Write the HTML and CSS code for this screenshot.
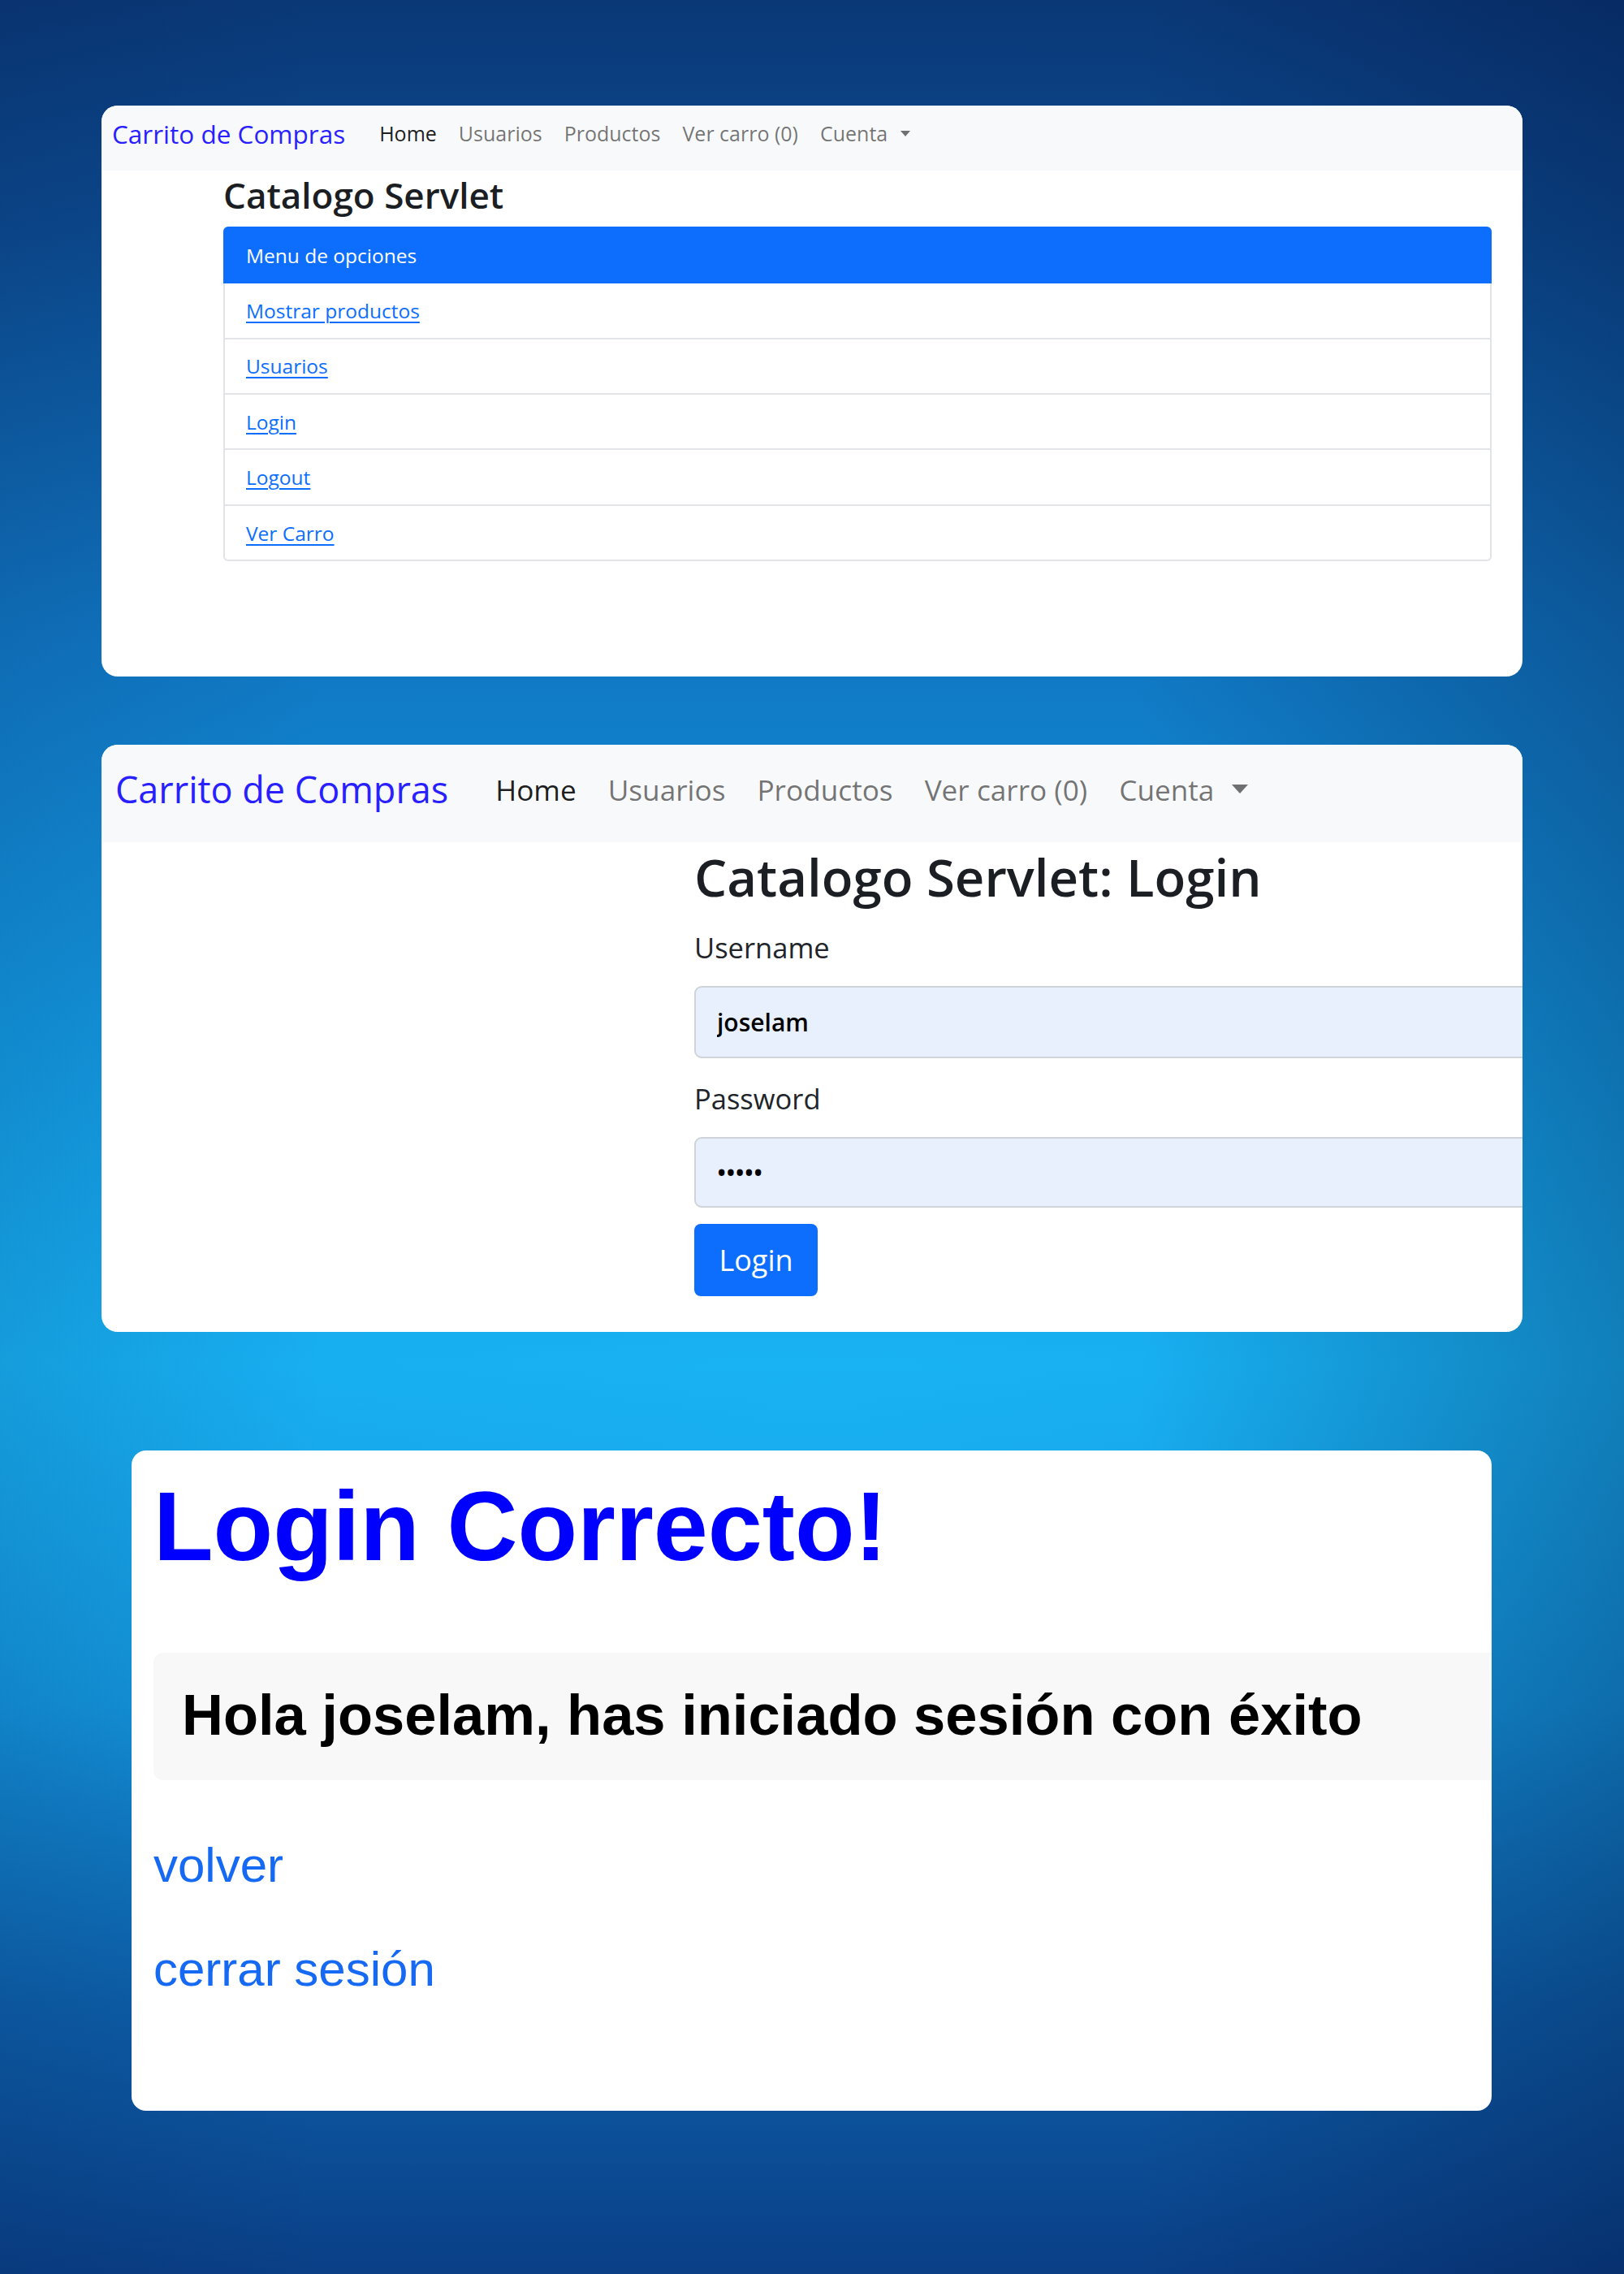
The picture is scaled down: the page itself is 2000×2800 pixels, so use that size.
FILE: index.html
```html
<!DOCTYPE html>
<html lang="es">
<head>
<meta charset="utf-8">
<title>Carrito de Compras</title>
<link rel="stylesheet" href="styles.css">
</head>
<body>
<main class="page">
  <section class="card card-catalog">
    <nav class="navbar navbar-sm">
      <a class="brand" href="#">Carrito de Compras</a>
      <ul class="nav-links">
        <li><a class="nav-link active" href="#">Home</a></li>
        <li><a class="nav-link" href="#">Usuarios</a></li>
        <li><a class="nav-link" href="#">Productos</a></li>
        <li><a class="nav-link" href="#">Ver carro (0)</a></li>
        <li><a class="nav-link" href="#">Cuenta<span class="caret"></span></a></li>
      </ul>
    </nav>
    <div class="catalog-body">
      <h3 class="catalog-title">Catalogo Servlet</h3>
      <div class="list-group">
        <div class="list-head">Menu de opciones</div>
        <div class="list-item"><a href="#">Mostrar productos</a></div>
        <div class="list-item"><a href="#">Usuarios</a></div>
        <div class="list-item"><a href="#">Login</a></div>
        <div class="list-item"><a href="#">Logout</a></div>
        <div class="list-item"><a href="#">Ver Carro</a></div>
      </div>
    </div>
  </section>

  <section class="card card-login">
    <nav class="navbar navbar-lg">
      <a class="brand" href="#">Carrito de Compras</a>
      <ul class="nav-links">
        <li><a class="nav-link active" href="#">Home</a></li>
        <li><a class="nav-link" href="#">Usuarios</a></li>
        <li><a class="nav-link" href="#">Productos</a></li>
        <li><a class="nav-link" href="#">Ver carro (0)</a></li>
        <li><a class="nav-link" href="#">Cuenta<span class="caret"></span></a></li>
      </ul>
    </nav>
    <form class="login-body">
      <h3 class="login-title">Catalogo Servlet: Login</h3>
      <label class="field-label" for="username">Username</label>
      <input class="field-input" id="username" type="text" value="joselam">
      <label class="field-label" for="password">Password</label>
      <input class="field-input field-pass" id="password" type="password" value="12345">
      <button class="btn-login" type="button">Login</button>
    </form>
  </section>

  <section class="card card-success">
    <h1 class="success-title">Login Correcto!</h1>
    <div class="success-box">
      <h3 class="success-msg">Hola joselam, has iniciado sesión con éxito</h3>
    </div>
    <a class="success-link link-back" href="#">volver</a>
    <a class="success-link link-logout" href="#">cerrar sesión</a>
  </section>
</main>
</body>
</html>
```
FILE: styles.css
```css
* { box-sizing: border-box; }

html, body { margin: 0; padding: 0; }

body {
  width: 2000px;
  height: 2800px;
  overflow: hidden;
  font-family: "Open Sans", "Noto Sans", sans-serif;
  color: #212529;
  background:
    linear-gradient(90deg, rgba(0, 10, 50, 0.10) 0%, rgba(0, 10, 50, 0) 20%, rgba(0, 10, 50, 0) 70%, rgba(0, 10, 50, 0.28) 100%),
    radial-gradient(ellipse 70% 22% at 50% 62%, rgba(30, 190, 250, 0.40) 0%, rgba(30, 190, 250, 0) 100%),
    linear-gradient(180deg, #0a3877 0%, #0c4a8f 10%, #1076c2 28%, #1396de 45%, #16abee 60%, #1391d9 75%, #0d5fa9 88%, #0a3f86 100%);
}

.page {
  display: flex;
  flex-direction: column;
  align-items: flex-start;
  padding-top: 130px;
}

.card {
  background: #ffffff;
  overflow: hidden;
  border-radius: 20px;
}

.card-catalog { margin-left: 125px; width: 1750px; height: 703px; }
.card-login   { margin: 84px 0 0 125px; width: 1750px; height: 723px; }
.card-success { margin: 146px 0 0 162px; width: 1675px; height: 813px; border-radius: 18px; padding-left: 27px; }

/* navbar */
.navbar {
  display: flex;
  align-items: center;
  background: #f8f9fa;
}
.navbar-sm { height: 80px; padding: 0 0 12px 13px; }
.navbar-lg { height: 120px; padding: 0 0 11px 17px; }

.brand { color: #2a1fff; text-decoration: none; white-space: nowrap; }
.navbar-sm .brand { font-size: 31.5px; margin-right: 28.5px; }
.navbar-lg .brand { font-size: 45px; margin-right: 38.5px; }

.nav-links { display: flex; list-style: none; margin: 0; padding: 0; }
.nav-link {
  display: flex;
  align-items: center;
  color: rgba(0, 0, 0, 0.55);
  text-decoration: none;
  white-space: nowrap;
}
.nav-link.active { color: rgba(0, 0, 0, 0.9); }
.navbar-sm .nav-link { font-size: 25px; padding: 0 13.5px; }
.navbar-lg .nav-link { font-size: 35.2px; padding: 0 19.5px; }

.caret {
  display: inline-block;
  width: 0;
  height: 0;
  border-style: solid;
  border-color: currentColor transparent transparent transparent;
}
.navbar-sm .caret { border-width: 7px 6px 0 6px; margin-left: 16px; }
.navbar-lg .caret { border-width: 11px 10px 0 10px; margin-left: 22px; }

/* catalog */
.catalog-body { margin: 0 38px 0 150px; }
.catalog-title {
  font-size: 44px;
  font-weight: 600;
  line-height: 1.2;
  margin: 4px 0 12.5px;
  color: #1b1f23;
}
.list-group { display: flex; flex-direction: column; }
.list-head {
  height: 70px;
  display: flex;
  align-items: center;
  padding-left: 28px;
  background: #0d6efd;
  color: #ffffff;
  font-size: 24.5px;
  border-radius: 6px 6px 0 0;
}
.list-item {
  height: 68.4px;
  display: flex;
  align-items: center;
  padding-left: 26px;
  border: 2px solid #e2e4e7;
  border-top: none;
  font-size: 24.5px;
}
.list-item:last-child { border-radius: 0 0 6px 6px; }
.list-item a { color: #0d6efd; text-decoration: underline; text-underline-offset: 4px; text-decoration-thickness: 2px; }

/* login form */
.login-body { margin-left: 730px; }
.login-title {
  font-size: 63.5px;
  font-weight: 600;
  line-height: 1.2;
  margin: 5px 0 22.5px;
  color: #1b1f23;
  white-space: nowrap;
}
.field-label {
  display: block;
  font-size: 34.5px;
  line-height: 1.5;
  color: #212529;
  margin-bottom: 21.5px;
}
.field-input {
  display: block;
  width: 1100px;
  height: 89px;
  margin: 0 0 23.7px;
  padding: 0 26px;
  border: 2px solid #ced4da;
  border-radius: 9px;
  background: #e8f0fe;
  font-family: "Open Sans", "Noto Sans", sans-serif;
  font-size: 30px;
  font-weight: 600;
  color: #000000;
  outline: none;
}
.field-pass { height: 87px; margin-bottom: 20.5px; }
.btn-login {
  display: block;
  width: 152px;
  height: 89px;
  padding: 0;
  border: none;
  border-radius: 8px;
  background: #0d6efd;
  color: #ffffff;
  font-family: "Open Sans", "Noto Sans", sans-serif;
  font-size: 36px;
}

/* success */
.success-title {
  font-family: "Liberation Sans", Arial, sans-serif;
  font-size: 120.5px;
  font-weight: 700;
  line-height: 138px;
  color: #0000ff;
  margin: 25.4px 0 0;
  white-space: nowrap;
}
.success-box {
  margin-top: 85.6px;
  height: 157px;
  background: #f8f8f8;
  border-radius: 12px 0 0 12px;
  padding-left: 35px;
}
.success-msg {
  font-family: "Liberation Sans", Arial, sans-serif;
  font-size: 70.5px;
  font-weight: 700;
  line-height: 153px;
  color: #000000;
  margin: 0;
  white-space: nowrap;
}
.success-link {
  display: block;
  width: max-content;
  font-family: "Liberation Sans", Arial, sans-serif;
  font-size: 60px;
  line-height: 69px;
  color: #1669f2;
  text-decoration: none;
}
.link-back { margin-top: 69.7px; }
.link-logout { margin-top: 59px; }
```
